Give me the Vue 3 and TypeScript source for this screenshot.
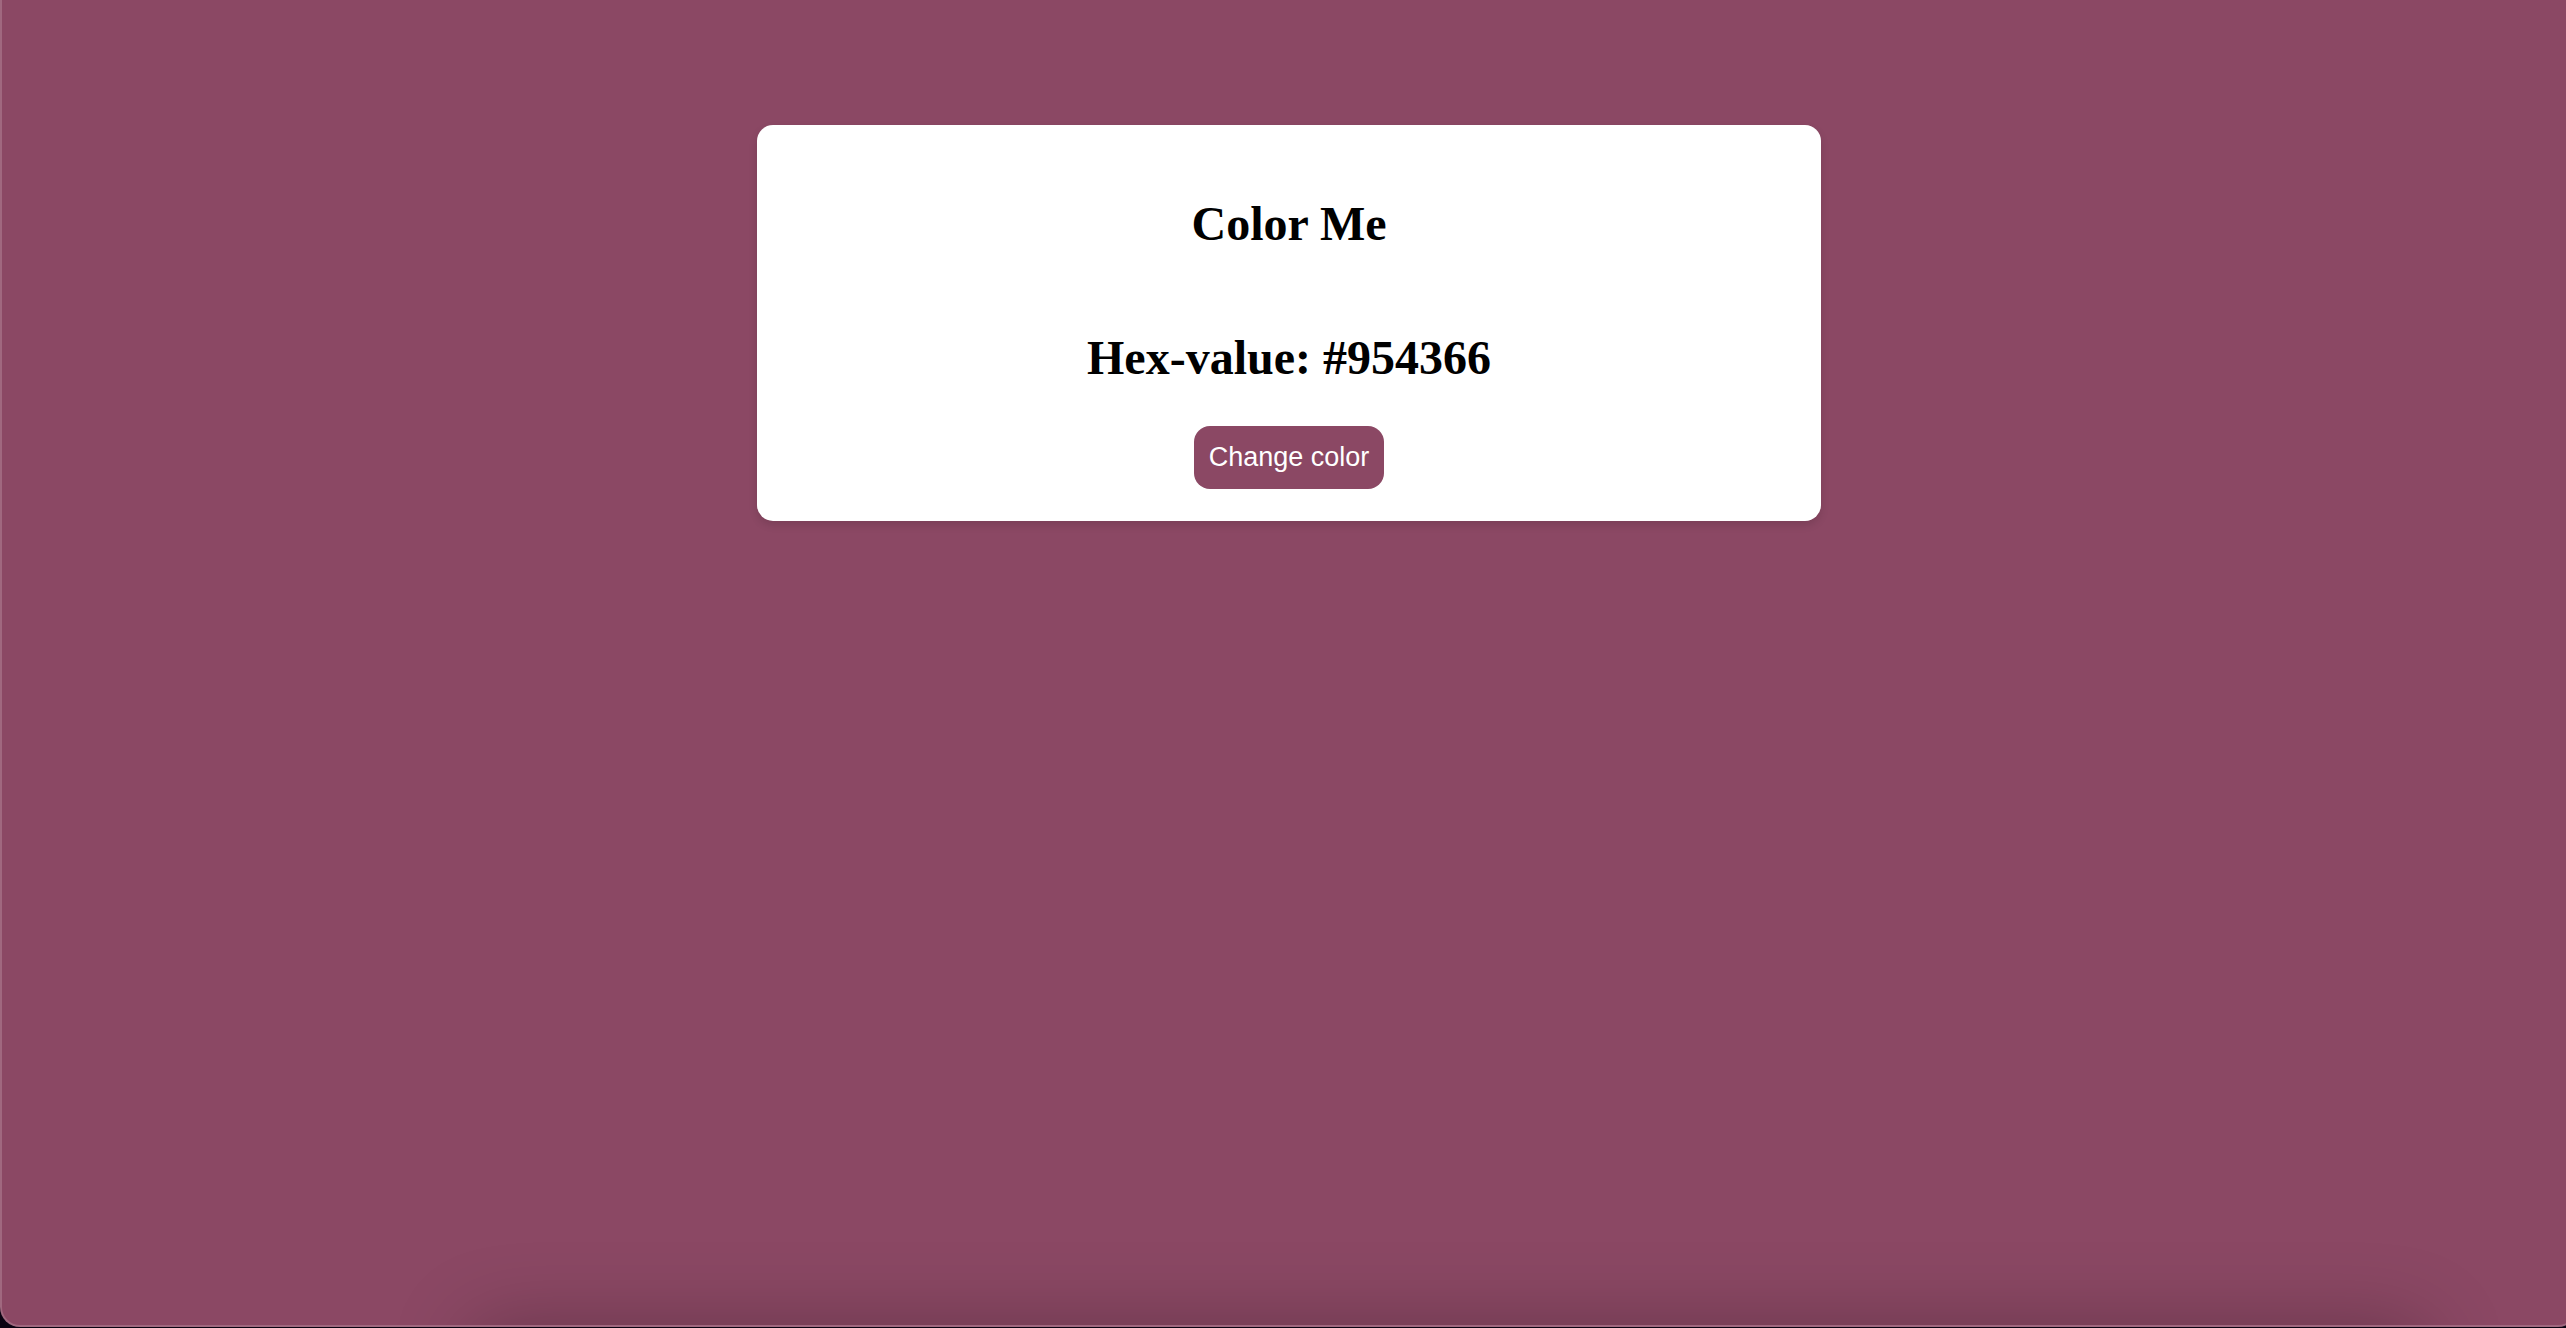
<script setup lang="ts">
import { ref } from 'vue'

const hexValue = ref<string>('#954366')
const shownColor = ref<string>('#8b4864')

function changeColor(): void {
  const next = Math.floor(Math.random() * 0x1000000)
  hexValue.value = '#' + next.toString(16).padStart(6, '0')
  shownColor.value = hexValue.value
}
</script>

<template>
  <div class="desktop">
    <main class="window" :style="{ backgroundColor: shownColor }">
      <section class="card">
        <h1>Color Me</h1>
        <h2>Hex-value: {{ hexValue }}</h2>
        <button type="button" :style="{ backgroundColor: shownColor }" @click="changeColor">Change color</button>
      </section>
      <div class="shade" aria-hidden="true"></div>
    </main>
  </div>
</template>

<style>
body {
  margin: 0;
  background: #0b0312;
}
</style>

<style scoped>
.desktop {
  display: flex;
  min-height: 100vh;
  overflow: hidden;
  background: #0b0312;
}

.window {
  position: relative;
  display: flex;
  flex: 0 0 auto;
  flex-direction: column;
  align-items: center;
  box-sizing: border-box;
  width: calc(100% + 12px);
  margin-bottom: 1px;
  padding: 125px 20px 40px;
  border: 2px solid #a0687f;
  border-top: 0;
  border-radius: 0 0 20px 20px;
  overflow: hidden;
}

.card {
  display: flex;
  flex-direction: column;
  align-items: center;
  box-sizing: border-box;
  width: 100%;
  max-width: 1064px;
  padding: 72px 32px 32px;
  border-radius: 16px;
  background: #fff;
  box-shadow: 0 4px 8px rgba(0, 0, 0, 0.12);
  color: #000;
  text-align: center;
}

h1,
h2 {
  margin: 0;
  font: bold 48px/54px "Liberation Serif", "Times New Roman", serif;
}

h2 {
  margin-top: 80px;
}

button {
  margin-top: 41px;
  padding: 16px 15px;
  border: 0;
  border-radius: 16px;
  color: #fff;
  font: 27px/31px "Liberation Sans", Arial, sans-serif;
  cursor: pointer;
}

/* soft shadow rising from the bottom edge of the window */
.shade {
  position: absolute;
  top: 100%;
  right: 150px;
  left: 470px;
  height: 120px;
  border-radius: 20px;
  box-shadow: 0 0 80px rgba(0, 0, 0, 0.25);
  pointer-events: none;
}
</style>
